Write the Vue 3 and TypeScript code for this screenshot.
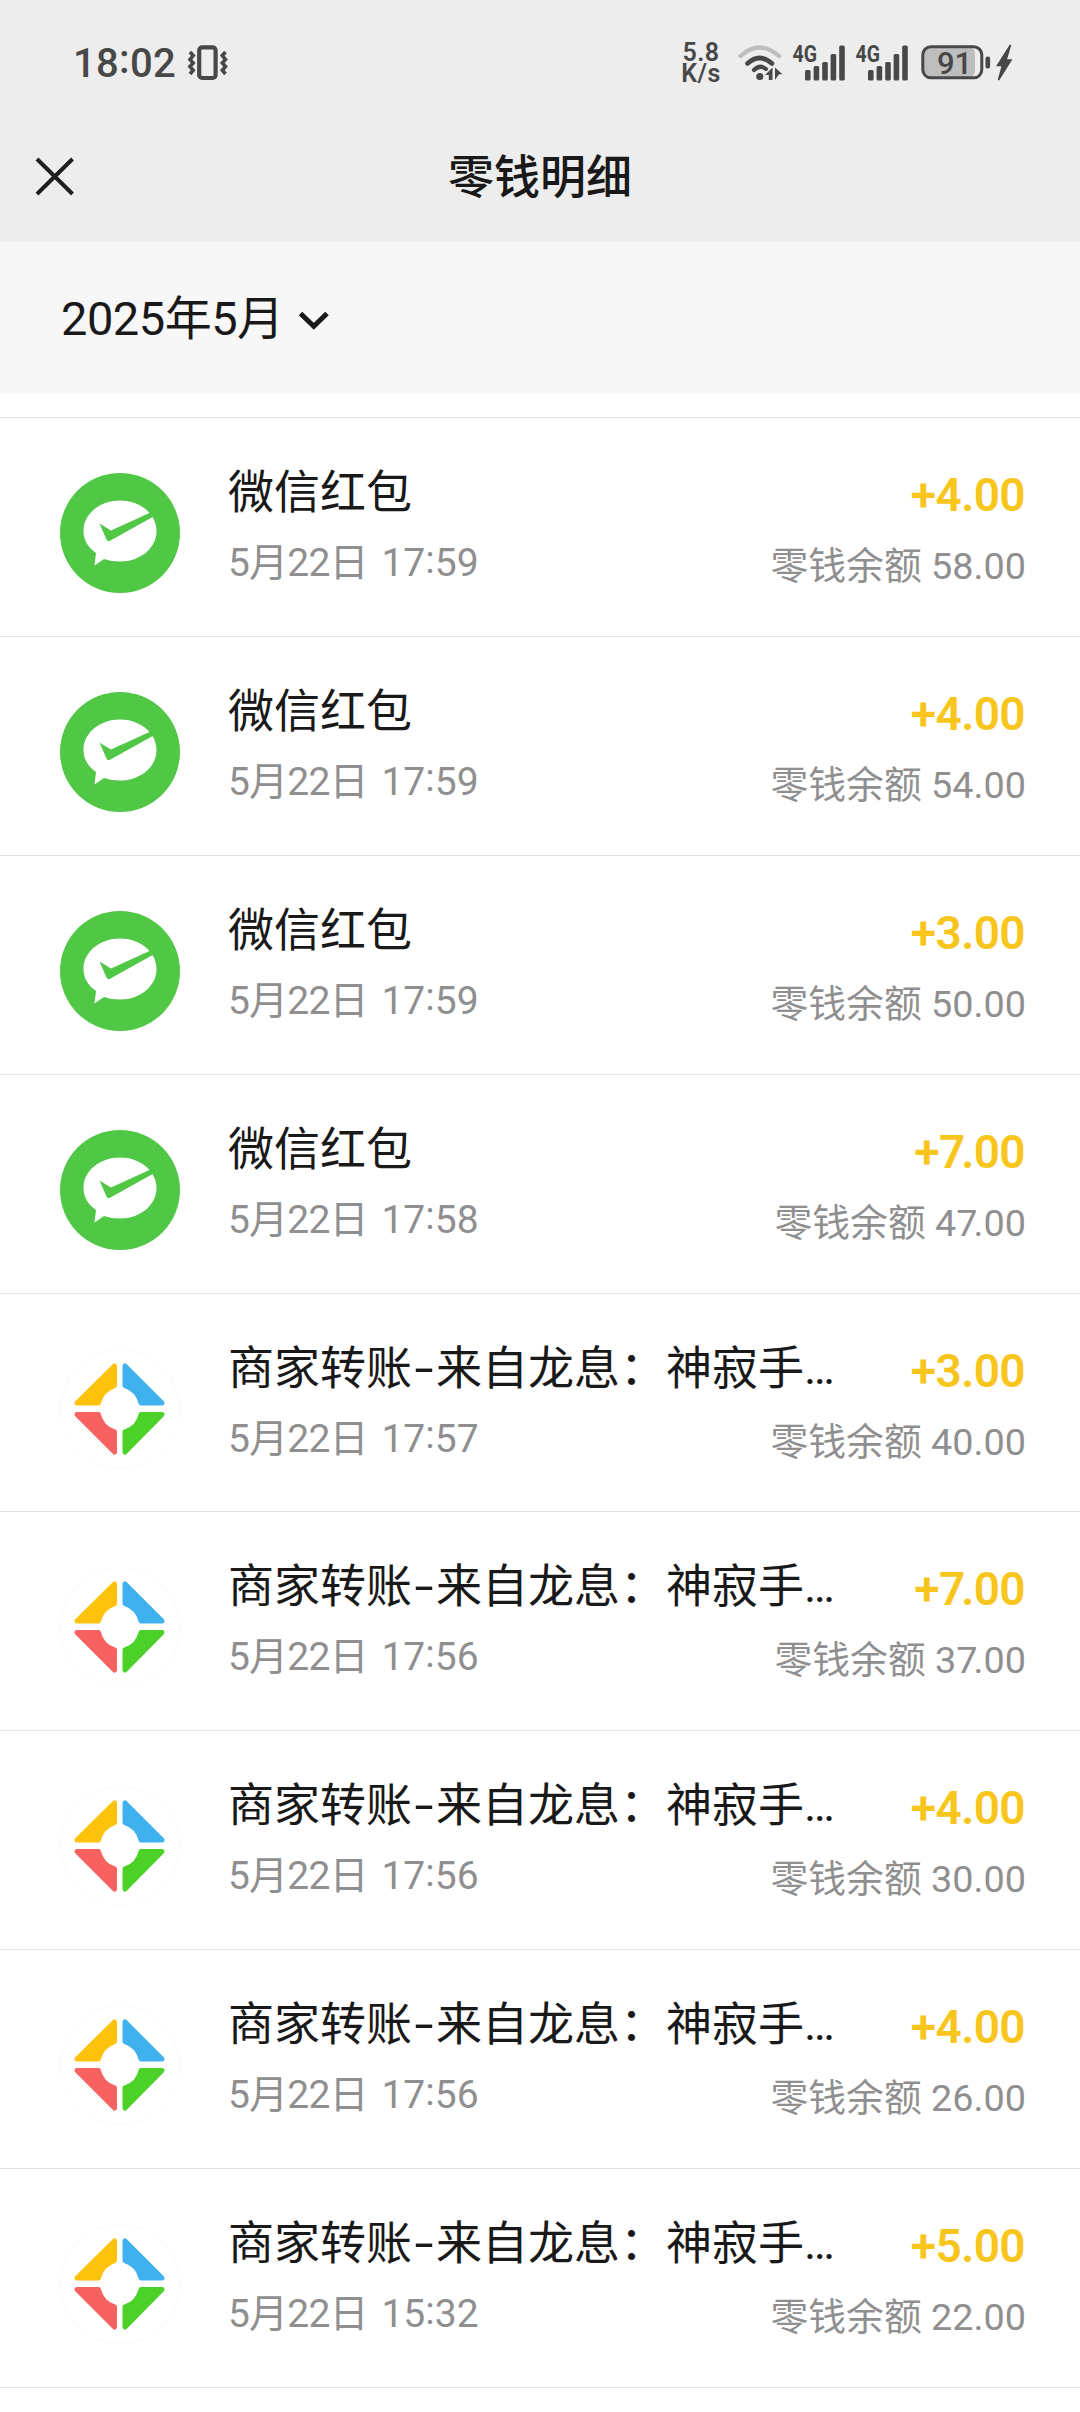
<script setup lang="ts">
interface Entry {
  kind: 'packet' | 'transfer'
  title: string[]
  day: string
  hour: string
  minute: string
  amount: string
  balance: string
}

const packet = (minute: string, amount: string, balance: string): Entry => ({
  kind: 'packet', title: ['微信红包'], day: '5月22日', hour: '17', minute, amount, balance,
})
const transfer = (hour: string, minute: string, amount: string, balance: string): Entry => ({
  kind: 'transfer', title: ['商家转账', '来自龙息：神寂手…'], day: '5月22日', hour, minute, amount, balance,
})

const entries: Entry[] = [
  packet('59', '+4.00', '58.00'),
  packet('59', '+4.00', '54.00'),
  packet('59', '+3.00', '50.00'),
  packet('58', '+7.00', '47.00'),
  transfer('17', '57', '+3.00', '40.00'),
  transfer('17', '56', '+7.00', '37.00'),
  transfer('17', '56', '+4.00', '30.00'),
  transfer('17', '56', '+4.00', '26.00'),
  transfer('15', '32', '+5.00', '22.00'),
]

// The last digit before the decimal point is split off so that "7." can be kerned.
const head = (s: string) => s.slice(0, -4)
const unit = (s: string) => s.slice(-4, -3)
const tail = (s: string) => s.slice(-3)
</script>

<template>
  <div class="screen">
    <header class="top">
      <div class="status">
        <span class="clock">18<i class="colon">:</i>02</span>
        <svg class="vibrate" width="42" height="36" viewBox="0 0 42 36" fill="none" stroke="#484848">
          <rect x="13.200" y="2.400" width="16.400" height="30.600" rx="3" stroke-width="4.200" />
          <path d="M4 7l3.200 3.600L4 14.400l3.200 3.600L4 21.600l3.200 3.600L4 29M39.500 7l-3.200 3.600 3.200 3.800-3.200 3.600 3.200 3.600-3.200 3.600 3.200 3.800" stroke-width="3.600" />
        </svg>
        <div class="speed"><span>5.8</span><span>K/s</span></div>
        <svg class="wifi" width="46" height="38" viewBox="0 0 46 38" fill="none" stroke-linecap="round">
          <path d="M3.500 12Q22.500 -5 42 12" stroke="#bdbdbd" stroke-width="4.200" />
          <path d="M10.500 19.500Q22.500 8.500 35 19.500" stroke="#484848" stroke-width="4.600" />
          <path d="M17 26Q23 20 29 25" stroke="#484848" stroke-width="4.200" />
          <circle cx="22.800" cy="32.500" r="3.600" fill="#484848" />
          <path d="M28 31L35.500 23.500V36H31.800V31ZM38 23.500L45.500 30.300H42L38 36Z" fill="#484848" />
        </svg>
        <svg v-for="n in 2" :key="n" class="signal" width="54" height="54" viewBox="0 -8 54 54">
          <text x="0.500" y="18.300" textLength="24.500" lengthAdjust="spacingAndGlyphs">4G</text>
          <rect x="13" y="26" width="5.600" height="10.500" rx="1.500" />
          <rect x="21.600" y="22" width="5.600" height="14.500" rx="1.500" />
          <rect x="30.200" y="18" width="5.600" height="18.500" rx="1.500" />
          <rect x="38.600" y="10" width="5.600" height="26.500" rx="1.500" />
          <rect x="47.200" y="1.500" width="5.600" height="35" rx="1.500" />
        </svg>
        <svg class="battery" width="92" height="40" viewBox="0 0 92 40">
          <rect x="4" y="4" width="51" height="30" rx="6" fill="#bdbdbd" />
          <rect x="2.800" y="3.800" width="59" height="31" rx="8" fill="none" stroke="#484848" stroke-width="3" />
          <rect x="65.500" y="13.500" width="4.600" height="12" rx="2" fill="#484848" />
          <path d="M90.500 2L77.500 22.500H82.500L78.500 37 91 17H86Z" fill="#484848" stroke="#484848" stroke-width="1.600" />
          <text x="17" y="30.500">91</text>
        </svg>
      </div>
      <div class="nav">
        <svg class="close" width="40" height="40" viewBox="0 0 40 40" stroke="#1f1f1f" stroke-width="4">
          <path d="M2 2L37.500 37M37.500 2L2 37" />
        </svg>
        <h1>零钱明细</h1>
      </div>
    </header>

    <div class="month">
      <span class="monthText">2025年5月</span>
      <svg width="32" height="20" viewBox="0 0 32 20" fill="none" stroke="#191919" stroke-width="5">
        <path d="M2.500 2.500L15.800 15.200 29 2.500" />
      </svg>
    </div>

    <main class="list">
      <article v-for="(e, i) in entries" :key="i" class="row">
        <svg v-if="e.kind === 'packet'" class="avatar" viewBox="0 0 120 120">
          <circle cx="60" cy="60" r="60" fill="#50c846" />
          <path d="M60 27.500C80.500 27.500 96.500 41 96.500 58S80.500 88.500 60 88.500C54 88.500 49 87.700 44 86L34.500 92.500 36 80C28 74.500 23.500 67 23.500 58 23.500 41 39.500 27.500 60 27.500Z" fill="#fff" />
          <path d="M39.500 50.500L51 57.500 90.500 39.500 94.500 43 50.500 67.500Q48 69.500 46.500 66.500Z" fill="#50c846" />
        </svg>
        <svg v-else class="avatar" viewBox="0 0 120 120">
          <circle cx="60" cy="60" r="59.500" fill="#fff" stroke="#fafafa" />
          <g stroke-width="5" stroke-linejoin="round">
            <path d="M54.500 17V36.500A24 24 0 0 0 38.500 54H17Z" fill="#fdc20b" stroke="#fdc20b" />
            <path d="M65 17V36.500A24 24 0 0 1 81 54H102Z" fill="#3eb1ee" stroke="#3eb1ee" />
            <path d="M54.500 103V83A24 24 0 0 1 38.500 65.500H17Z" fill="#f76260" stroke="#f76260" />
            <path d="M65 103V83A24 24 0 0 0 81 65.500H102Z" fill="#4bd127" stroke="#4bd127" />
          </g>
          <circle cx="59.500" cy="60" r="19" fill="#fff" />
        </svg>
        <div class="info">
          <div class="title"><template v-for="(part, p) in e.title" :key="p"><span v-if="p" class="dash">-</span>{{ part }}</template></div>
          <div class="date"><span class="day">{{ e.day }}</span> <span class="time">{{ e.hour }}<i class="colon">:</i>{{ e.minute }}</span></div>
        </div>
        <div class="money">
          <div class="amount">{{ head(e.amount) }}<span :class="{ kern: unit(e.amount) === '7' }">{{ unit(e.amount) }}</span>{{ tail(e.amount) }}</div>
          <div class="balance">零钱余额 {{ head(e.balance) }}<span :class="{ kern: unit(e.balance) === '7' }">{{ unit(e.balance) }}</span>{{ tail(e.balance) }}</div>
        </div>
      </article>
    </main>
  </div>
</template>

<style>
body {
  margin: 0;
  background: #fff;
}
</style>

<style scoped>
.screen {
  width: 1080px;
  height: 2412px;
  overflow: hidden;
  background: #fff;
  color: #191919;
  font-family: Roboto, "Noto Sans CJK SC", sans-serif;
}
.colon {
  font-style: normal;
  position: relative;
  top: -0.09em;
}
.top {
  height: 242px;
  background: #ededed;
}
.status {
  display: flex;
  align-items: center;
  height: 126px;
  color: #484848;
}
.clock {
  width: 113px;
  margin-left: 73px;
  font-size: 40px;
  font-weight: 500;
  line-height: 48px;
  padding-top: 1px;
  letter-spacing: 0.3px;
}
.vibrate {
  width: 42px;
}
.speed {
  display: flex;
  flex-direction: column;
  align-items: center;
  width: 40px;
  margin-left: 453px;
  padding-top: 2px;
  font-size: 25px;
  font-weight: 600;
  line-height: 20.6px;
  letter-spacing: 0.5px;
}
.wifi {
  margin-left: 16px;
}
.signal {
  margin-left: 9px;
  fill: #484848;
}
.signal text {
  font-size: 23px;
  font-weight: 700;
}
.battery {
  margin-left: 11px;
}
.battery text {
  font-size: 31px;
  font-weight: 500;
  fill: #484848;
}
.nav {
  display: flex;
  align-items: center;
  height: 101px;
}
.close {
  margin-left: 35px;
}
h1 {
  flex: 1;
  margin: 0 75px 0 0;
  text-align: center;
  font-size: 46px;
  font-weight: 500;
  line-height: 66px;
}
.month {
  display: flex;
  align-items: center;
  gap: 14px;
  height: 151px;
  padding-left: 61px;
  background: #f7f7f7;
}
.monthText {
  padding-top: 2px;
  font-size: 47px;
  line-height: 60px;
  letter-spacing: -0.5px;
}
.month svg {
  margin-top: 7px;
}
.list {
  margin-top: 24px;
  border-top: 1px solid #e3e3e3;
}
.row {
  display: flex;
  box-sizing: border-box;
  height: 218.9px;
  padding: 0 54px 0 60px;
  border-bottom: 1px solid #e3e3e3;
}
.avatar {
  width: 120px;
  height: 120px;
  margin: 55px 48px 0 0;
  flex: none;
}
.info {
  flex: 1;
  min-width: 0;
  white-space: nowrap;
}
.title {
  margin-top: 42px;
  font-size: 46px;
  line-height: 64px;
}
.dash {
  display: inline-block;
  width: 24px;
  text-align: center;
  transform: scaleX(1.5);
}
.date {
  margin-top: 11px;
  font-size: 39px;
  line-height: 56px;
  color: #8f8f8f;
}
.day {
  letter-spacing: -0.8px;
}
.time {
  margin-left: 4px;
}
.money {
  text-align: right;
  white-space: nowrap;
}
.amount {
  margin: 45px 1px 0 0;
  font-size: 46px;
  font-weight: 600;
  line-height: 64px;
  letter-spacing: -0.6px;
  color: #f8c51c;
}
.kern {
  letter-spacing: -4px;
}
.balance {
  margin-top: 12px;
  font-size: 37.8px;
  line-height: 54px;
  color: #8f8f8f;
}
</style>
